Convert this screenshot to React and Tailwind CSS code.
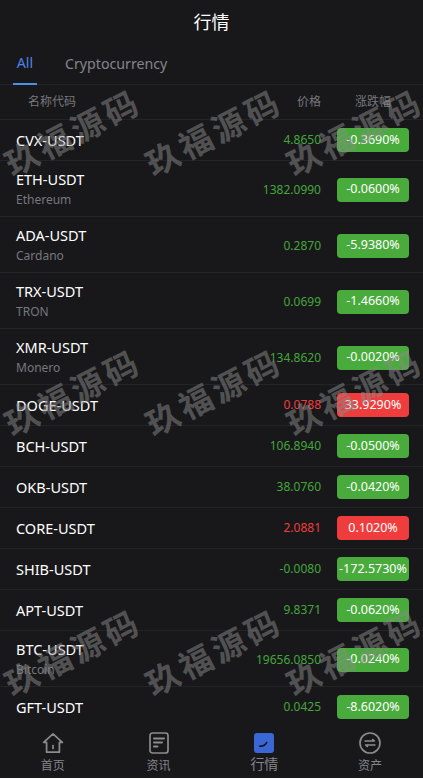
const ROWS = [
  { symbol: 'CVX-USDT', price: '4.8650', change: '-0.3690%' },
  { symbol: 'ETH-USDT', name: 'Ethereum', price: '1382.0990', change: '-0.0600%' },
  { symbol: 'ADA-USDT', name: 'Cardano', price: '0.2870', change: '-5.9380%' },
  { symbol: 'TRX-USDT', name: 'TRON', price: '0.0699', change: '-1.4660%' },
  { symbol: 'XMR-USDT', name: 'Monero', price: '134.8620', change: '-0.0020%' },
  { symbol: 'DOGE-USDT', price: '0.0788', change: '33.9290%', up: true },
  { symbol: 'BCH-USDT', price: '106.8940', change: '-0.0500%' },
  { symbol: 'OKB-USDT', price: '38.0760', change: '-0.0420%' },
  { symbol: 'CORE-USDT', price: '2.0881', change: '0.1020%', up: true },
  { symbol: 'SHIB-USDT', price: '-0.0080', change: '-172.5730%' },
  { symbol: 'APT-USDT', price: '9.8371', change: '-0.0620%' },
  { symbol: 'BTC-USDT', name: 'Bitcoin', price: '19656.0850', change: '-0.0240%' },
  { symbol: 'GFT-USDT', price: '0.0425', change: '-8.6020%' },
]

const FONT = "font-['Noto_Sans','Noto_Sans_CJK_SC',sans-serif]"

function HomeIcon() {
  return (
    <svg width="22" height="22" viewBox="0 0 22 22" fill="none" stroke="#8b8b8d" strokeWidth="1.7" strokeLinejoin="round" strokeLinecap="round">
      <path d="M11 1.8 1.6 10.4h3v9.8h12.8v-9.8h3z" />
      <path d="M11 13.5v3" />
    </svg>
  )
}

function NewsIcon() {
  return (
    <svg width="20" height="22" viewBox="0 0 20 22" fill="none" stroke="#8b8b8d" strokeWidth="1.7" strokeLinecap="round">
      <rect x="1" y="1" width="18" height="20" rx="2.5" />
      <path d="M5 6.5h10M5 10.5h8M5 14.5h3.5" strokeWidth="2" />
    </svg>
  )
}

function MarketIcon() {
  return (
    <svg width="20" height="20" viewBox="0 0 20 20">
      <rect width="20" height="20" rx="3" fill="#3b67d6" />
      <path d="M6 13.2c3 .2 5.2-1 6.6-3.6" fill="none" stroke="#16161a" strokeWidth="1.8" strokeLinecap="round" />
    </svg>
  )
}

function AssetIcon() {
  return (
    <svg width="22" height="22" viewBox="0 0 22 22" fill="none" stroke="#8b8b8d" strokeLinecap="round">
      <circle cx="11" cy="11" r="10" strokeWidth="1.7" />
      <path d="M6 9h9.5l-2-1.6M16 13H6.5l2 1.6" strokeWidth="1.4" strokeLinejoin="round" />
    </svg>
  )
}

const NAV = [
  { label: '首页', icon: <HomeIcon /> },
  { label: '资讯', icon: <NewsIcon /> },
  { label: '行情', icon: <MarketIcon />, active: true },
  { label: '资产', icon: <AssetIcon /> },
]

export default function App() {
  return (
    <div className={`relative flex h-[778px] flex-col overflow-hidden bg-[#18181b] ${FONT}`}>
      <header className="flex h-11 shrink-0 items-center justify-center text-[18px] text-white">行情</header>

      <div className="flex h-[41px] shrink-0 gap-[28px] border-b border-[#242428] pl-[13px] text-[14.2px]">
        <div className="flex h-[41px] w-6 flex-col items-center justify-between pt-[9px]">
          <span className="leading-5 text-[#4f82e8]">All</span>
          <span className="h-0.5 w-6 bg-[#4f8fe8]" />
        </div>
        <span className="pt-[10px] leading-5 text-[#85858a]">Cryptocurrency</span>
      </div>

      <div className="flex h-[35px] shrink-0 items-center border-b border-[#242428] text-xs text-[#77777c]">
        <span className="pl-7">名称代码</span>
        <span className="ml-auto">价格</span>
        <span className="w-[102px] pl-[34px]">涨跌幅</span>
      </div>

      <main className="min-h-0 flex-1">
        {ROWS.map(row => (
          <div key={row.symbol} className={`flex items-center border-b border-[#242428] pl-4 pr-[14px] ${row.name ? 'h-14' : 'h-[41px]'}`}>
            <div>
              <p className="text-[14.5px] leading-5 text-white">{row.symbol}</p>
              {row.name && <p className="mt-0.5 text-xs leading-[18px] text-[#77777c]">{row.name}</p>}
            </div>
            <span className={`ml-auto text-xs ${row.name ? 'mt-0.5' : ''} ${row.up ? 'text-[#ef3d3d]' : 'text-[#44a63a]'}`}>{row.price}</span>
            <span className={`ml-4 flex h-6 w-[72px] items-center justify-center rounded-sm text-[12.5px] whitespace-nowrap text-white ${row.name ? 'mt-0.5' : ''} ${row.up ? 'bg-[#ef3d3d]' : 'bg-[#4aab3d]'}`}>
              {row.change}
            </span>
          </div>
        ))}
      </main>

      <nav className="grid h-[55px] shrink-0 grid-cols-4 bg-[#18181b]">
        {NAV.map(item => (
          <div key={item.label} className="flex flex-col items-center pt-[9px]">
            <div className="flex h-[22px] items-center">{item.icon}</div>
            <span className={`leading-4 text-[#85858a] ${item.active ? 'mt-[2px] text-sm' : 'mt-1 text-xs'}`}>{item.label}</span>
          </div>
        ))}
      </nav>

      {/* watermark lies over the whole page */}
      <div className="pointer-events-none absolute inset-0 grid auto-rows-[260px] grid-cols-[repeat(3,141px)] pl-[2px] pt-[3px]">
        {Array.from({ length: 9 }).map((_, i) => (
          <div key={i} className="flex items-center justify-center">
            <span className="-rotate-[27deg] text-[33px] font-bold tracking-[4px] whitespace-nowrap text-[#8a8a8a]/50">玖福源码</span>
          </div>
        ))}
      </div>
    </div>
  )
}
